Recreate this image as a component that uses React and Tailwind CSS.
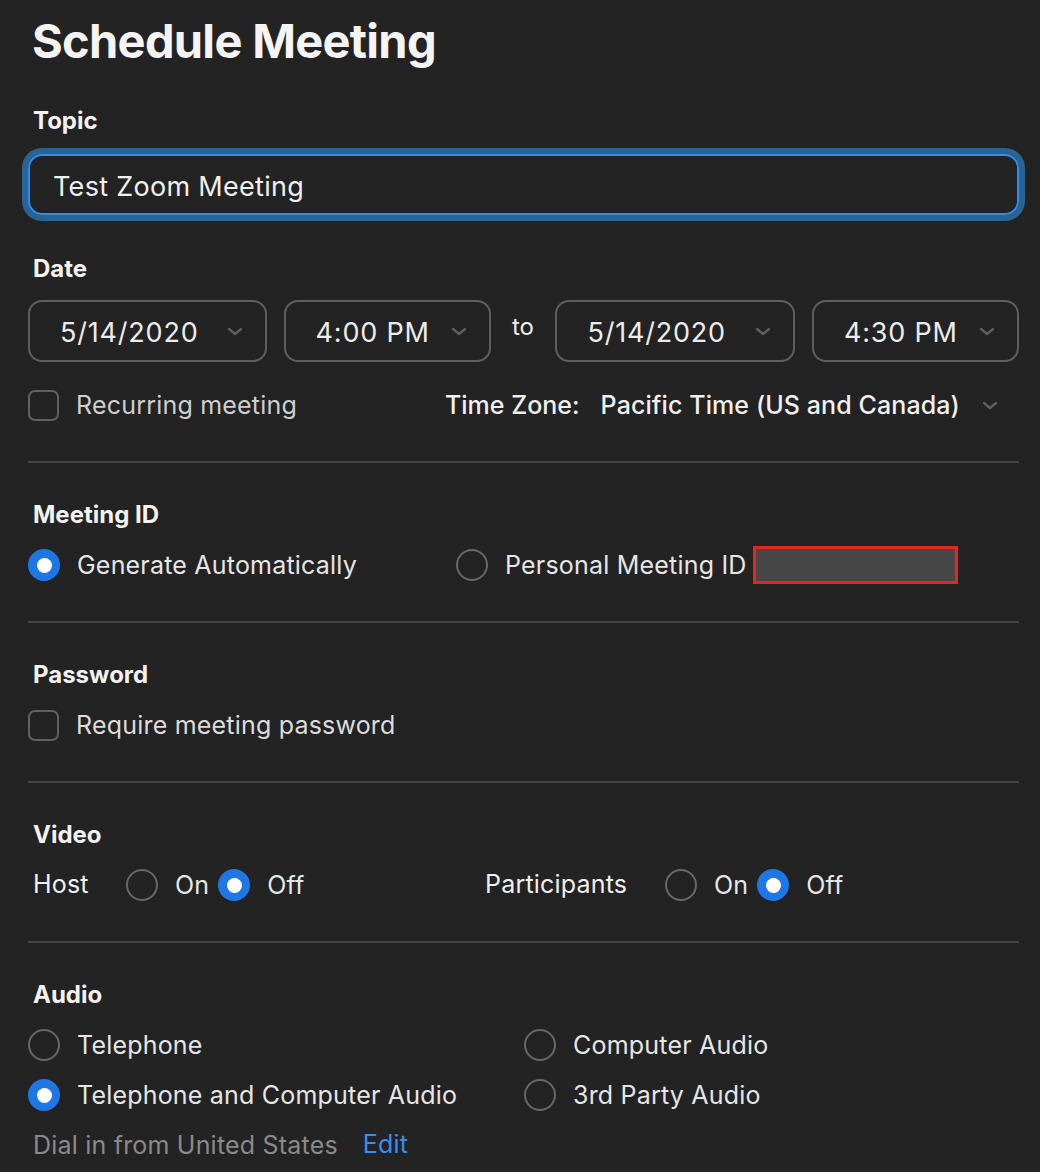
import { useState } from 'react';

function Chevron() {
  return (
    <svg width="16" height="9" viewBox="0 0 16 9" className="shrink-0">
      <path d="M2 2 L8 7 L14 2" fill="none" stroke="#5f5f5f" strokeWidth="2.4" strokeLinecap="round" strokeLinejoin="round" />
    </svg>
  );
}

function Radio({ checked }) {
  if (checked) {
    return (
      <span className="w-8 h-8 rounded-full bg-[#1f77e6] flex items-center justify-center shrink-0">
        <span className="w-[15px] h-[15px] rounded-full bg-white" />
      </span>
    );
  }
  return <span className="w-8 h-8 rounded-full border-2 border-[#686868] shrink-0" />;
}

function Checkbox() {
  return <span className="w-[31px] h-[31px] rounded-[7px] border-2 border-[#616161] shrink-0" />;
}

function Select({ value, width }) {
  return (
    <div className={`${width} h-[62px] rounded-[14px] border-2 border-[#5e5e5e] flex items-center pl-[30px] pr-[22px]`}>
      <span className="text-[27px] leading-none tracking-[0.8px] text-[#ececec] flex-1 pt-[3px]">{value}</span>
      <Chevron />
    </div>
  );
}

function SectionLabel({ children }) {
  return (
    <div className="h-10 flex items-center pl-[5px]">
      <span className="text-[24px] leading-none font-bold text-[#f2f2f2]">{children}</span>
    </div>
  );
}

function Divider() {
  return <div className="h-[2px] bg-[#444444]" />;
}

function Text({ children, className = 'text-[#e6e6e6]' }) {
  return <span className={`text-[25px] leading-none tracking-[0.2px] ${className}`}>{children}</span>;
}

function RadioOption({ checked, label, className = '' }) {
  return (
    <div className={`flex items-center gap-[17px] ${className}`}>
      <Radio checked={checked} />
      <Text>{label}</Text>
    </div>
  );
}

export default function App() {
  const [topic, setTopic] = useState('Test Zoom Meeting');

  return (
    <div className="w-[1040px] min-h-[1172px] bg-[#232323] pl-[28px] pr-[21px] font-['Inter',sans-serif] text-[#ececec]">
      {/* Title */}
      <div className="h-20 flex items-center pl-[4px]">
        <h1 className="text-[47px] leading-none font-bold tracking-[-0.7px] text-[#f4f4f4]">Schedule Meeting</h1>
      </div>

      {/* Topic */}
      <div className="mt-[21px]">
        <SectionLabel>Topic</SectionLabel>
      </div>
      <div className="mt-[13px] h-[61px] rounded-[14px] border-2 border-[#2e8ef4] ring-[6px] ring-[#2a6592] flex items-center px-[23px]">
        <input
          value={topic}
          onChange={(e) => setTopic(e.target.value)}
          className="w-full bg-transparent outline-none text-[27px] leading-none tracking-[0.3px] text-[#f0f0f0] pt-[3px]"
        />
      </div>

      {/* Date */}
      <div className="mt-[34px]">
        <SectionLabel>Date</SectionLabel>
      </div>
      <div className="mt-[11px] flex items-center">
        <Select value="5/14/2020" width="w-[239px]" />
        <div className="ml-[17px]">
          <Select value="4:00 PM" width="w-[207px]" />
        </div>
        <span className="w-[65px] text-center text-[24px] leading-none text-[#ececec] -mt-[8px]">to</span>
        <Select value="5/14/2020" width="w-[240px]" />
        <div className="ml-[17px]">
          <Select value="4:30 PM" width="w-[207px]" />
        </div>
      </div>
      <div className="mt-[23px] h-[41px] flex items-center">
        <div className="w-[417px] flex items-center gap-[17px]">
          <Checkbox />
          <Text className="text-[#cfcfcf]">Recurring meeting</Text>
        </div>
        <span className="text-[25px] leading-none font-medium text-[#f0f0f0]">Time Zone:</span>
        <span className="ml-[21px] text-[25px] leading-none font-medium tracking-[0.1px] text-[#f0f0f0]">Pacific Time (US and Canada)</span>
        <span className="ml-[22px]">
          <Chevron />
        </span>
      </div>

      <div className="mt-[35px]">
        <Divider />
      </div>

      {/* Meeting ID */}
      <div className="pt-[32px] pb-[36px]">
        <SectionLabel>Meeting ID</SectionLabel>
        <div className="mt-[10px] h-10 flex items-center">
          <RadioOption checked label="Generate Automatically" className="w-[428px]" />
          <RadioOption label="Personal Meeting ID" />
          <div className="ml-[6px] w-[205px] h-[38px] border-[3px] border-[#e6261c] bg-[#474747]" />
        </div>
      </div>
      <Divider />

      {/* Password */}
      <div className="pt-[32px] pb-[36px]">
        <SectionLabel>Password</SectionLabel>
        <div className="mt-[10px] h-10 flex items-center gap-[17px]">
          <Checkbox />
          <Text className="text-[#dcdcdc]">Require meeting password</Text>
        </div>
      </div>
      <Divider />

      {/* Video */}
      <div className="pt-[32px] pb-[36px]">
        <SectionLabel>Video</SectionLabel>
        <div className="mt-[10px] h-10 flex items-center">
          <div className="w-[457px] flex items-center">
            <span className="w-[98px] pl-[5px]">
              <Text className="text-[#f0f0f0]">Host</Text>
            </span>
            <RadioOption label="On" />
            <RadioOption checked label="Off" className="ml-[9px]" />
          </div>
          <span className="w-[180px]">
            <Text className="text-[#f0f0f0]">Participants</Text>
          </span>
          <RadioOption label="On" />
          <RadioOption checked label="Off" className="ml-[9px]" />
        </div>
      </div>
      <Divider />

      {/* Audio */}
      <div className="pt-[32px]">
        <SectionLabel>Audio</SectionLabel>
        <div className="mt-[10px] grid grid-cols-[496px_1fr] gap-y-[10px]">
          <RadioOption label="Telephone" className="h-10" />
          <RadioOption label="Computer Audio" className="h-10" />
          <RadioOption checked label="Telephone and Computer Audio" className="h-10" />
          <RadioOption label="3rd Party Audio" className="h-10" />
        </div>
        <div className="mt-[10px] h-10 flex items-center pl-[5px]">
          <Text className="text-[#8a8a8a]">Dial in from United States</Text>
          <span className="ml-[25px]">
            <Text className="text-[#3a8ef0]">Edit</Text>
          </span>
        </div>
      </div>
    </div>
  );
}
